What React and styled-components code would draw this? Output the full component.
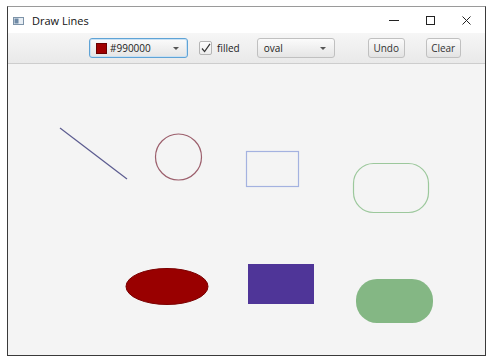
import React from "react";
import styled, { createGlobalStyle } from "styled-components";

const GlobalStyle = createGlobalStyle`
  html, body {
    margin: 0;
    padding: 0;
    background: #ffffff;
  }
  body {
    font-family: "Open Sans", "Noto Sans", sans-serif;
  }
`;

const shapes = [
  { kind: "line", x1: 52, y1: 64, x2: 119, y2: 115, stroke: "#5c5c90" },
  { kind: "circle", cx: 170.5, cy: 93, r: 23, stroke: "#9c5f6c" },
  { kind: "rect", x: 238.5, y: 87.5, w: 52, h: 35, stroke: "#a4b2e0" },
  { kind: "rect", x: 345.5, y: 99.5, w: 75, h: 49, rx: 20, stroke: "#9cc89c" },
  { kind: "ellipse", cx: 159, cy: 222.5, rx: 41, ry: 18, fill: "#990000", stroke: "#7a0000" },
  { kind: "rect", x: 240, y: 200, w: 66, h: 40, fill: "#4f3598" },
  { kind: "rect", x: 348, y: 215, w: 77, h: 44, rx: 21, fill: "#84b784" },
];

const App = () => {
  return (
    <>
      <GlobalStyle />
      <Frame>
        <TitleBar>
          <AppIcon>
            <svg width="11" height="8" viewBox="0 0 11 8">
              <rect x="0.5" y="0.5" width="10" height="7" fill="#e8eef4" stroke="#7d93a8" />
              <rect x="1.5" y="1.5" width="4" height="5" fill="#6f8aa6" />
            </svg>
          </AppIcon>
          <Title>Draw Lines</Title>
          <WinButtons>
            <WinButton>
              <svg width="10" height="10" viewBox="0 0 10 10">
                <line x1="0" y1="5.5" x2="10" y2="5.5" stroke="#222" strokeWidth="1" />
              </svg>
            </WinButton>
            <WinButton>
              <svg width="9" height="9" viewBox="0 0 9 9">
                <rect x="0.5" y="0.5" width="8" height="8" fill="none" stroke="#222" strokeWidth="1" />
              </svg>
            </WinButton>
            <WinButton>
              <svg width="9" height="9" viewBox="0 0 9 9">
                <path d="M0.5 0.5 L8.5 8.5 M8.5 0.5 L0.5 8.5" stroke="#222" strokeWidth="1" />
              </svg>
            </WinButton>
          </WinButtons>
        </TitleBar>

        <ToolBar>
          <ColorPicker>
            <Swatch />
            <ComboText>#990000</ComboText>
            <Arrow />
          </ColorPicker>
          <CheckGroup>
            <CheckBox>
              <svg width="10" height="10" viewBox="0 0 10 10">
                <path d="M1 5.5 L3.6 8.6 L9 0.8" fill="none" stroke="#333" strokeWidth="1.2" />
              </svg>
            </CheckBox>
            <Label>filled</Label>
          </CheckGroup>
          <ShapeCombo>
            <ComboText>oval</ComboText>
            <Arrow />
          </ShapeCombo>
          <Button $ml={33} $w={37}>Undo</Button>
          <Button $ml={21} $w={35}>Clear</Button>
        </ToolBar>

        <Canvas>
          <svg width="476" height="290" viewBox="0 0 476 290">
            {shapes.map((s, i) => {
              if (s.kind === "line")
                return <line key={i} x1={s.x1} y1={s.y1} x2={s.x2} y2={s.y2} stroke={s.stroke} strokeWidth="1.2" />;
              if (s.kind === "circle")
                return <circle key={i} cx={s.cx} cy={s.cy} r={s.r} fill="none" stroke={s.stroke} strokeWidth="1.2" />;
              if (s.kind === "ellipse")
                return <ellipse key={i} cx={s.cx} cy={s.cy} rx={s.rx} ry={s.ry} fill={s.fill} stroke={s.stroke} strokeWidth="1" />;
              return (
                <rect
                  key={i}
                  x={s.x}
                  y={s.y}
                  width={s.w}
                  height={s.h}
                  rx={s.rx || 0}
                  fill={s.fill || "none"}
                  stroke={s.stroke || "none"}
                  strokeWidth="1.2"
                />
              );
            })}
          </svg>
        </Canvas>
      </Frame>
    </>
  );
};

export default App;

const Frame = styled.div`
  margin: 6px 0 0 7px;
  width: 477px;
  height: 348px;
  border: 1px solid #3a3a3a;
  border-top-color: #9a9a9a;
  display: flex;
  flex-direction: column;
  background: #f4f4f4;
  overflow: hidden;
`;

const TitleBar = styled.div`
  height: 26px;
  flex-shrink: 0;
  background: #ffffff;
  display: flex;
  align-items: center;
  padding-left: 5px;
`;

const AppIcon = styled.div`
  display: flex;
  align-items: center;
  margin-top: 1px;
`;

const Title = styled.div`
  margin-left: 8px;
  font-size: 11px;
  color: #111;
`;

const WinButtons = styled.div`
  margin-left: auto;
  display: flex;
  align-items: center;
  margin-right: 1px;
`;

const WinButton = styled.div`
  width: 36px;
  display: flex;
  justify-content: center;
  align-items: center;
`;

const ToolBar = styled.div`
  height: 31px;
  flex-shrink: 0;
  box-sizing: border-box;
  background: linear-gradient(#f6f6f6, #e9e9e9);
  border-bottom: 1px solid #cdcdcd;
  display: flex;
  align-items: center;
  padding-left: 81px;
  font-size: 10px;
  color: #222;
`;

const comboBase = `
  height: 20px;
  box-sizing: border-box;
  border-radius: 3px;
  display: flex;
  align-items: center;
  background: linear-gradient(#fbfbfb, #e5e5e5);
  position: relative;
`;

const ColorPicker = styled.div`
  ${comboBase}
  width: 99px;
  border: 1px solid #5fa3d6;
  box-shadow: inset 0 0 0 1px #c9e1f3;
  padding-left: 6px;
`;

const ShapeCombo = styled.div`
  ${comboBase}
  width: 78px;
  margin-left: 17px;
  border: 1px solid #c0c0c0;
  padding-left: 6px;
`;

const Swatch = styled.div`
  width: 9px;
  height: 9px;
  background: #a00000;
  border: 1px solid #6a0000;
  margin-right: 3px;
`;

const ComboText = styled.span`
  color: #222;
`;

const Arrow = styled.div`
  position: absolute;
  right: 8px;
  top: 8px;
  width: 0;
  height: 0;
  border-left: 3px solid transparent;
  border-right: 3px solid transparent;
  border-top: 3px solid #555;
`;

const CheckGroup = styled.div`
  display: flex;
  align-items: center;
  margin-left: 11px;
`;

const CheckBox = styled.div`
  width: 13px;
  height: 14px;
  box-sizing: border-box;
  border: 1px solid #b5b5b5;
  border-radius: 2px;
  background: linear-gradient(#fdfdfd, #ececec);
  display: flex;
  align-items: center;
  justify-content: center;
`;

const Label = styled.span`
  margin-left: 5px;
`;

const Button = styled.div`
  height: 20px;
  width: ${(p) => p.$w}px;
  margin-left: ${(p) => p.$ml}px;
  box-sizing: border-box;
  border: 1px solid #c0c0c0;
  border-radius: 3px;
  background: linear-gradient(#fbfbfb, #e3e3e3);
  display: flex;
  align-items: center;
  justify-content: center;
  color: #333;
`;

const Canvas = styled.div`
  flex: 1;
  background: #f4f4f4;
  svg {
    display: block;
  }
`;
